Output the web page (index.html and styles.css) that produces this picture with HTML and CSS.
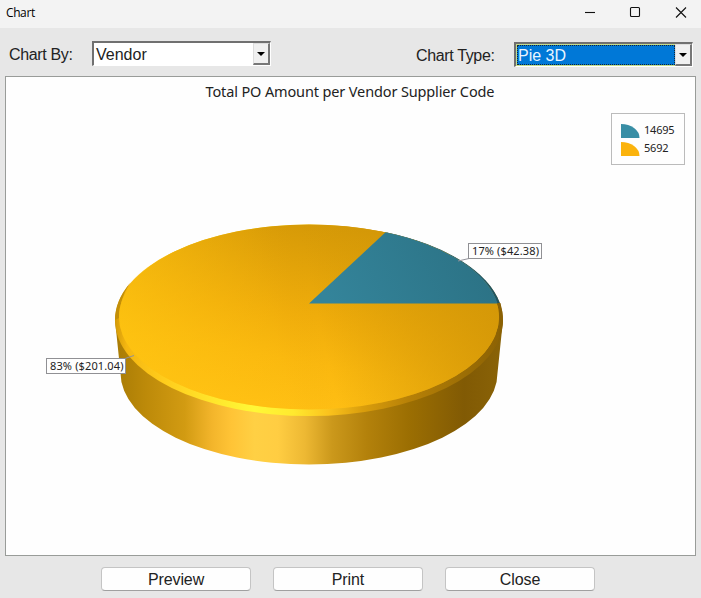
FILE: index.html
```
<!DOCTYPE html>
<html lang="en">
<head>
    <meta charset="UTF-8">
    <title>Chart</title>
    <link rel="stylesheet" href="styles.css">
</head>
<body>
<div class="title-bar">
    <span class="window-title">Chart</span>
    <svg class="window-controls" width="110" height="20" viewBox="0 0 110 20">
        <path d="M4 10.5H14" />
        <rect x="49.5" y="5.5" width="9" height="9" rx="1" />
        <path d="M95 5.5L105 15.5M105 5.5L95 15.5" />
    </svg>
</div>

<div class="toolbar">
    <span class="field-label label-by">Chart By:</span>
    <div class="combo">
        <div class="combo-value">Vendor</div>
        <div class="combo-arrow"></div>
    </div>
    <span class="field-label label-type">Chart Type:</span>
    <div class="combo combo-type">
        <div class="combo-value selected">Pie 3D</div>
        <div class="combo-arrow"></div>
    </div>
</div>

<div class="chart-panel">
    <svg class="chart" width="689" height="478" viewBox="6 77 689 478">
        <defs>
            <linearGradient id="side" gradientUnits="userSpaceOnUse" x1="115" y1="0" x2="503" y2="0">
                <stop offset="0" stop-color="#a87b05" />
                <stop offset="0.08" stop-color="#bd8a09" />
                <stop offset="0.18" stop-color="#d29b12" />
                <stop offset="0.25" stop-color="#f3b52b" />
                <stop offset="0.3" stop-color="#ffc436" />
                <stop offset="0.36" stop-color="#ffd044" />
                <stop offset="0.42" stop-color="#ffcd42" />
                <stop offset="0.49" stop-color="#edb833" />
                <stop offset="0.56" stop-color="#cb981b" />
                <stop offset="0.65" stop-color="#b3810b" />
                <stop offset="0.76" stop-color="#9b6e02" />
                <stop offset="0.9" stop-color="#815a04" />
                <stop offset="1" stop-color="#8a6307" />
            </linearGradient>
            <linearGradient id="bevel" gradientUnits="userSpaceOnUse" x1="115" y1="0" x2="503" y2="0">
                <stop offset="0" stop-color="#d39a08" />
                <stop offset="0.03" stop-color="#f5b711" />
                <stop offset="0.12" stop-color="#ffcb1b" />
                <stop offset="0.25" stop-color="#ffe52b" />
                <stop offset="0.36" stop-color="#fff837" />
                <stop offset="0.46" stop-color="#ffe92f" />
                <stop offset="0.55" stop-color="#fbc31d" />
                <stop offset="0.64" stop-color="#d99d0c" />
                <stop offset="0.76" stop-color="#b68007" />
                <stop offset="0.9" stop-color="#9c6e05" />
                <stop offset="1" stop-color="#8b6104" />
            </linearGradient>
            <linearGradient id="top" gradientUnits="userSpaceOnUse" x1="330" y1="225" x2="300" y2="409">
                <stop offset="0" stop-color="#d59907" />
                <stop offset="0.5" stop-color="#f0ad0b" />
                <stop offset="0.75" stop-color="#fab80f" />
                <stop offset="1" stop-color="#ffbf14" />
            </linearGradient>
            <linearGradient id="topLight" gradientUnits="userSpaceOnUse" x1="135" y1="390" x2="500" y2="310">
                <stop offset="0" stop-color="#ffc811" stop-opacity="0.6" />
                <stop offset="0.4" stop-color="#ffc20e" stop-opacity="0.1" />
                <stop offset="0.52" stop-color="#d39707" stop-opacity="0" />
                <stop offset="0.75" stop-color="#d39707" stop-opacity="0.45" />
                <stop offset="1" stop-color="#d39707" stop-opacity="0.9" />
            </linearGradient>
            <linearGradient id="slice" gradientUnits="userSpaceOnUse" x1="330" y1="305" x2="470" y2="240">
                <stop offset="0" stop-color="#34849a" />
                <stop offset="1" stop-color="#2c7386" />
            </linearGradient>
        </defs>

        <!-- side wall -->
        <path d="M115 320L120.500 373A188.500 91.500 0 0 0 497.500 373L503 320Z" fill="url(#side)" />
        <!-- bevelled rim -->
        <ellipse cx="309" cy="320.300" rx="194" ry="95.700" fill="url(#bevel)" />
        <path d="M115 320A194 95.700 0 0 1 130 283Q119 300 119 318Z" fill="#c38f08" />
        <path d="M386 232.200A194 95.700 0 0 1 499.800 303H480Z" fill="#205461" />
        <path d="M498 303H500.500Q503 312 503 321L498 345Q500.500 330 500 317Z" fill="#8b6104" />
        <!-- top face -->
        <ellipse cx="309" cy="317" rx="190" ry="92.500" fill="url(#top)" />
        <ellipse cx="309" cy="317" rx="190" ry="92.500" fill="url(#topLight)" />
        <path d="M309 303.500L385.500 232.300A190 92.500 0 0 1 497.500 303.500Z" fill="url(#slice)" />

        <path class="leader" d="M458 261L469 258.500" />
        <rect class="tag" x="468.500" y="243.500" width="73" height="15" />
        <text class="tag-text" x="472" y="255" textLength="67">17% ($42.38)</text>

        <path class="leader" d="M125 358.500L134 355.500" />
        <rect class="tag" x="46.500" y="358.500" width="79" height="15" />
        <text class="tag-text" x="50" y="370" textLength="73.500">83% ($201.04)</text>

        <text class="chart-title" x="205.500" y="97" textLength="289">Total PO Amount per Vendor Supplier Code</text>
    </svg>

    <div class="legend">
        <div class="legend-item">
            <svg width="19" height="14"><path d="M0 0A18.500 14 0 0 1 18.500 14H0Z" fill="#388ea5" /></svg>
            <span>14695</span>
        </div>
        <div class="legend-item">
            <svg width="19" height="14"><path d="M0 0A18.500 14 0 0 1 18.500 14H0Z" fill="#fbb30c" /></svg>
            <span>5692</span>
        </div>
    </div>
</div>

<div class="button-row">
    <button>Preview</button>
    <button>Print</button>
    <button>Close</button>
</div>
</body>
</html>
```
FILE: styles.css
```
body {
    margin: 0;
    height: 598px;
    overflow: hidden;
    background-color: #e7e7e7;
    font-family: "Liberation Sans", Arial, sans-serif;
    color: #222;
}
.title-bar {
    display: flex;
    justify-content: space-between;
    box-sizing: border-box;
    height: 28px;
    padding: 2px 10px 0 6px;
    background-color: #f3f3f3;
}
.window-title {
    font-family: "Open Sans", sans-serif;
    font-size: 12px;
    line-height: 22px;
    letter-spacing: -0.4px;
    color: #000;
}
.window-controls {
    fill: none;
    stroke: #111;
    stroke-width: 1.1;
}
.toolbar {
    display: flex;
    align-items: flex-start;
    box-sizing: border-box;
    height: 48px;
    padding: 13px 8px 0 9px;
}
.field-label {
    font-size: 16px;
    line-height: 27px;
    letter-spacing: -0.35px;
    white-space: nowrap;
}
.label-by {
    width: 83px;
}
.label-type {
    width: 98px;
    margin-left: 145px;
    padding-top: 1px;
}
.combo {
    display: flex;
    box-sizing: border-box;
    width: 179px;
    height: 25px;
    background-color: #fff;
    border: 2px solid;
    border-color: #707070 #fff #fff #707070;
    border-width: 2px 1px 1px 2px;
}
.combo-type {
    margin-top: 1px;
}
.combo-value {
    flex: 1;
    padding-left: 2px;
    font-size: 16px;
    line-height: 24px;
}
.combo-value.selected {
    box-sizing: border-box;
    margin: 1px 0 1px 1px;
    padding-left: 0;
    line-height: 20px;
    color: #e9f5ff;
    background-color: #0078d7;
    border: 1px dotted #10263a;
    outline: 1px solid #c5dc8c;
}
.combo-arrow {
    display: flex;
    align-items: center;
    justify-content: center;
    box-sizing: border-box;
    width: 17px;
    background-color: #f0f0f0;
    border: 1px solid;
    border-color: #ddd #777 #777 #ddd;
    border-width: 1px 2px 2px 1px;
}
.combo-arrow::after {
    content: "";
    border: 4px solid transparent;
    border-top-color: #000;
    border-bottom-width: 0;
}
.chart-panel {
    position: relative;
    box-sizing: border-box;
    width: 691px;
    height: 480px;
    margin-left: 5px;
    background-color: #fefefe;
    border: 1px solid #999c99;
}
.chart {
    display: block;
}
.chart-title {
    font-family: "Noto Sans", sans-serif;
    font-size: 14.5px;
    fill: #222;
}
.tag {
    fill: #fefefe;
    stroke: #909094;
}
.tag-text {
    font-family: "Noto Sans", sans-serif;
    font-size: 11px;
    fill: #222;
}
.leader {
    fill: none;
    stroke: #92929a;
}
.legend {
    position: absolute;
    top: 36px;
    right: 10px;
    display: flex;
    flex-direction: column;
    gap: 4px;
    box-sizing: border-box;
    width: 74px;
    height: 52px;
    padding: 10px 0 0 9px;
    border: 1px solid #bbb;
}
.legend-item {
    display: flex;
    gap: 4px;
    height: 14px;
    font-family: "Noto Sans", sans-serif;
    font-size: 11px;
    line-height: 11px;
    letter-spacing: -0.2px;
}
.button-row {
    display: flex;
    gap: 22px;
    padding: 11px 0 0 101px;
}
.button-row button {
    box-sizing: border-box;
    width: 150px;
    height: 24px;
    padding: 2px 0 0;
    font-family: inherit;
    font-size: 16px;
    line-height: 20px;
    letter-spacing: -0.1px;
    color: #222;
    background-color: #fefefe;
    border: 1px solid #c4c4c4;
    border-bottom-color: #a0a0a0;
    border-radius: 4px;
}
```
